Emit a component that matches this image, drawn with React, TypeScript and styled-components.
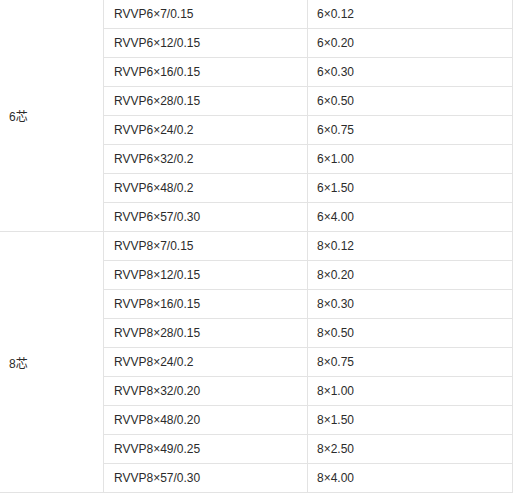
import React from "react";
import styled, { createGlobalStyle } from "styled-components";

const Global = createGlobalStyle`
  html, body { margin: 0; padding: 0; background: #fff; }
  body { font-family: "Liberation Sans", Arial, "Noto Sans CJK SC", sans-serif; }
`;

const Table = styled.table`
  border-collapse: separate;
  border-spacing: 0;
  table-layout: fixed;
  width: 513px;
  font-size: 12px;
  color: #2b2b2b;
`;

const Col = styled.col<{ $w: number }>`
  width: ${(p) => p.$w}px;
`;

const Cell = styled.td<{ $pad: number }>`
  box-sizing: border-box;
  height: 29px;
  padding: 0 0 0 ${(p) => p.$pad}px;
  border-right: 1px solid #e3e3e3;
  border-bottom: 1px solid #e3e3e3;
  vertical-align: middle;
  white-space: nowrap;
`;

const groups = [
  {
    label: "6芯",
    rows: [
      ["RVVP6×7/0.15", "6×0.12"],
      ["RVVP6×12/0.15", "6×0.20"],
      ["RVVP6×16/0.15", "6×0.30"],
      ["RVVP6×28/0.15", "6×0.50"],
      ["RVVP6×24/0.2", "6×0.75"],
      ["RVVP6×32/0.2", "6×1.00"],
      ["RVVP6×48/0.2", "6×1.50"],
      ["RVVP6×57/0.30", "6×4.00"],
    ],
  },
  {
    label: "8芯",
    rows: [
      ["RVVP8×7/0.15", "8×0.12"],
      ["RVVP8×12/0.15", "8×0.20"],
      ["RVVP8×16/0.15", "8×0.30"],
      ["RVVP8×28/0.15", "8×0.50"],
      ["RVVP8×24/0.2", "8×0.75"],
      ["RVVP8×32/0.20", "8×1.00"],
      ["RVVP8×48/0.20", "8×1.50"],
      ["RVVP8×49/0.25", "8×2.50"],
      ["RVVP8×57/0.30", "8×4.00"],
    ],
  },
];

export default function App() {
  return (
    <>
      <Global />
      <Table>
        <colgroup>
          <Col $w={104} />
          <Col $w={204} />
          <Col $w={205} />
        </colgroup>
        <tbody>
          {groups.map((g) =>
            g.rows.map((r, i) => (
              <tr key={g.label + i}>
                {i === 0 && (
                  <Cell $pad={9} rowSpan={g.rows.length}>
                    {g.label}
                  </Cell>
                )}
                <Cell $pad={10}>{r[0]}</Cell>
                <Cell $pad={9}>{r[1]}</Cell>
              </tr>
            ))
          )}
        </tbody>
      </Table>
    </>
  );
}
